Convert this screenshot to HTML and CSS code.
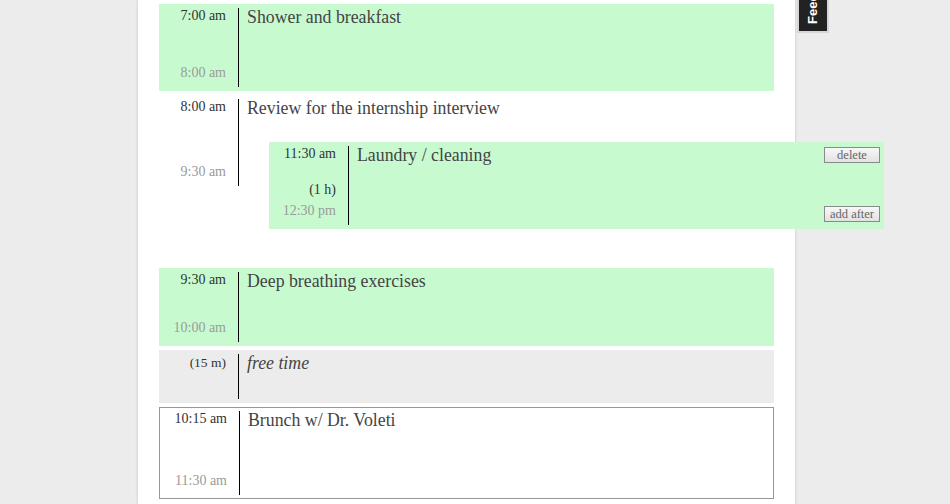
FILE: index.html
```html
<!DOCTYPE html>
<html>
<head>
<meta charset="utf-8">
<link rel="stylesheet" href="styles.css">
</head>
<body>
<div class="page">
  <div class="column">
    <div class="block green" style="height:87px">
      <div class="times"><span class="start">7:00 am</span><span class="end">8:00 am</span></div>
      <div class="title">Shower and breakfast</div>
    </div>

    <div class="block plain holder" style="height:95px">
      <div class="times"><span class="start">8:00 am</span><span class="end">9:30 am</span></div>
      <div class="title">Review for the internship interview</div>

      <div class="block green dragging" style="height:87px">
        <div class="times">
          <span class="start">11:30 am</span>
          <span class="endgroup"><span class="dur">(1 h)</span><span class="end">12:30 pm</span></span>
        </div>
        <div class="title">Laundry / cleaning</div>
        <div class="actions">
          <button class="btn">delete</button>
          <button class="btn">add after</button>
        </div>
      </div>
    </div>

    <div class="slot"></div>

    <div class="block green" style="height:78px">
      <div class="times"><span class="start">9:30 am</span><span class="end">10:00 am</span></div>
      <div class="title">Deep breathing exercises</div>
    </div>

    <div class="block free" style="height:53px">
      <div class="times"><span class="start dur-top">(15 m)</span></div>
      <div class="title italic">free time</div>
    </div>

    <div class="block outlined" style="height:92px">
      <div class="times"><span class="start">10:15 am</span><span class="end">11:30 am</span></div>
      <div class="title">Brunch w/ Dr. Voleti</div>
    </div>
  </div>

  <div class="feedback"><span class="feedback-text">Feedback</span></div>
</div>
</body>
</html>
```

FILE: styles.css
```css
html, body {
  margin: 0;
  padding: 0;
  background: #ececec;
  height: 100%;
  overflow: hidden;
}

.page {
  position: relative;
  height: 100%;
  font-family: "Liberation Serif", "Times New Roman", serif;
}

.column {
  margin-left: 138px;
  width: 657px;
  min-height: 100%;
  box-sizing: border-box;
  background: #fff;
  box-shadow: 0 0 3px rgba(0, 0, 0, 0.18);
  padding: 4px 21px 0 21px;
  display: flex;
  flex-direction: column;
  gap: 4px;
}

.block {
  display: flex;
  box-sizing: border-box;
  padding: 4px 0;
  width: 615px;
  flex-shrink: 0;
}

.green { background: #c8fad0; }
.free { background: #ececec; }
.outlined { border: 1px solid #979797; padding: 3px 0; }

.holder { position: relative; }

.dragging {
  position: absolute;
  top: 47px;
  left: 110px;
  z-index: 2;
}

.slot { height: 70px; flex-shrink: 0; }

.times {
  width: 80px;
  flex-shrink: 0;
  box-sizing: border-box;
  border-right: 1px solid #000;
  padding: 0 12px 6px 0;
  display: flex;
  flex-direction: column;
  justify-content: space-between;
  align-items: flex-end;
  font-size: 14px;
  line-height: 16px;
  white-space: nowrap;
}

.start { color: #333; margin-top: 0; }
.end { color: #9a9a9a; }
.dur-top { margin-top: 1px; font-size: 13.5px; }

.endgroup {
  display: flex;
  flex-direction: column;
  align-items: flex-end;
}
.dur { color: #333; margin-bottom: 5px; }

.title {
  flex: 1;
  padding-left: 8px;
  margin-top: -1px;
  font-size: 17.8px;
  line-height: 20px;
  color: #444;
  white-space: nowrap;
}
.italic { font-style: italic; }

.actions {
  display: flex;
  flex-direction: column;
  justify-content: space-between;
  align-items: flex-end;
  padding: 1px 4px 3px 0;
}

.btn {
  width: 56px;
  height: 16px;
  box-sizing: border-box;
  padding: 0;
  border: 1px solid #8a8a8a;
  border-radius: 0;
  background: linear-gradient(#f8f8f8, #e2e2e2);
  font-family: "Liberation Serif", "Times New Roman", serif;
  font-size: 12.5px;
  line-height: 13px;
  color: #666;
}

.feedback {
  position: absolute;
  left: 797px;
  top: -60px;
  width: 32px;
  height: 93px;
  box-sizing: border-box;
  background: #222;
  border: 2px solid #d6d6d6;
  display: flex;
  align-items: flex-end;
  justify-content: center;
  overflow: hidden;
}

.feedback-text {
  writing-mode: vertical-rl;
  transform: rotate(180deg);
  font-family: "Liberation Sans", Arial, sans-serif;
  font-weight: bold;
  font-size: 13px;
  color: #fff;
  margin-bottom: 7px;
  line-height: 14px;
}
```
